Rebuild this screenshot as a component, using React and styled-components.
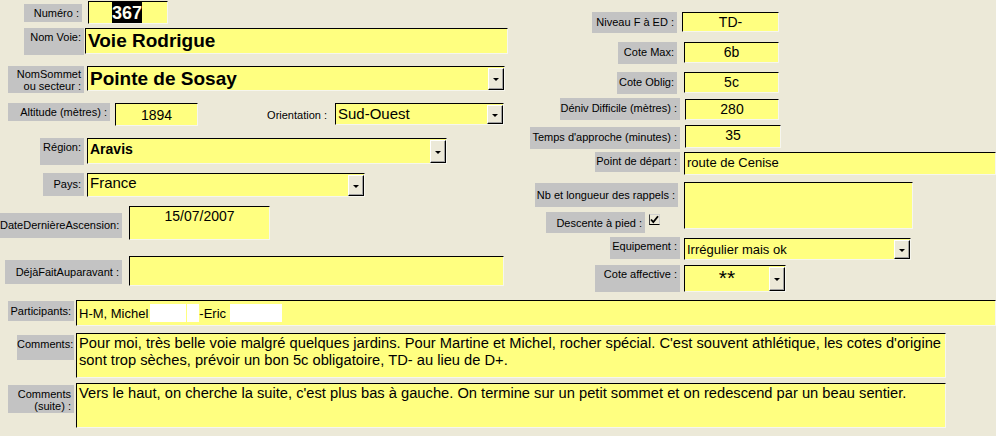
import React from 'react';
import styled, { createGlobalStyle } from 'styled-components';

const Global = createGlobalStyle`
  html, body { margin: 0; padding: 0; background: #ECE9D8; }
  body { font-family: "Liberation Sans", Arial, sans-serif; }
`;

const Page = styled.div`
  width: 996px;
  height: 436px;
  overflow: hidden;
  background: #ECE9D8;
  display: flex;
  flex-direction: column;
`;

const Top = styled.div`
  display: flex;
  height: 292px;
  flex-shrink: 0;
`;

const Column = styled.div`
  display: flex;
  flex-direction: column;
  width: ${p => p.$w}px;
  flex-shrink: 0;
`;

const Bottom = styled.div`
  display: flex;
  flex-direction: column;
  margin-top: 8px;
`;

const Row = styled.div`
  display: flex;
  align-items: flex-start;
  margin-top: ${p => p.$mt || 0}px;
  padding-left: ${p => p.$x || 0}px;
`;

const Stack = styled.div`
  display: flex;
  flex-direction: column;
  align-items: flex-start;
  margin-left: ${p => p.$ml || 0}px;
  flex-shrink: 0;
`;

const Label = styled.div`
  box-sizing: border-box;
  flex-shrink: 0;
  width: ${p => p.$w}px;
  height: ${p => p.$h}px;
  margin-top: ${p => p.$mt || 0}px;
  margin-left: ${p => p.$ml || 0}px;
  background: ${p => (p.$plain ? 'transparent' : '#c3c3c3')};
  color: #000;
  font-size: 11px;
  line-height: 12px;
  text-align: right;
  padding: ${p => (p.$pt ?? 3)}px 3px 0 0;
  white-space: pre-line;
`;

const Field = styled.div`
  box-sizing: border-box;
  flex-shrink: 0;
  width: ${p => p.$w}px;
  height: ${p => p.$h}px;
  margin-top: ${p => p.$mt || 0}px;
  margin-left: ${p => p.$ml || 0}px;
  background: #ffff80;
  border-top: 1px solid #000;
  border-left: 1px solid #000;
  border-right: 1px solid #f6f6ee;
  border-bottom: 1px solid #f6f6ee;
  color: #000;
  font-size: ${p => p.$size || 14}px;
  font-weight: ${p => (p.$bold ? 700 : 400)};
  line-height: ${p => p.$lh || 17}px;
  text-align: ${p => p.$align || 'left'};
  padding: ${p => (p.$pt ?? 2)}px 2px 0 ${p => (p.$pl ?? 2)}px;
  white-space: ${p => (p.$wrap ? 'normal' : 'nowrap')};
  overflow: hidden;
`;

const Combo = styled(Field)`
  display: flex;
  align-items: stretch;
  padding: 0;
`;

const ComboValue = styled.div`
  flex: 1;
  min-width: 0;
  text-align: ${p => p.$align || 'left'};
  font-size: ${p => (p.$vsize ? `${p.$vsize}px` : 'inherit')};
  line-height: ${p => (p.$lh ? `${p.$lh}px` : 'inherit')};
  padding: ${p => (p.$pt ?? 2)}px 2px 0 2px;
`;

const DropButton = styled.div`
  box-sizing: border-box;
  width: 16px;
  flex-shrink: 0;
  margin: 1px 0 0 0;
  background: #ece9d8;
  border-top: 1px solid #fff;
  border-left: 1px solid #fff;
  border-right: 1px solid #000;
  border-bottom: 1px solid #000;
  box-shadow: inset -1px -1px 0 #a0a0a0;
  display: flex;
  align-items: center;
  justify-content: center;
  &::after {
    content: '';
    width: 0;
    height: 0;
    border-left: 3px solid transparent;
    border-right: 3px solid transparent;
    border-top: 3px solid #000;
    margin-top: 1px;
  }
`;

const Selected = styled.span`
  background: #000;
  color: #fffff0;
  padding: 1px 0 1px 0;
`;

const Redact = styled.span`
  display: inline-block;
  width: ${p => p.$w}px;
  height: 18px;
  margin-left: ${p => p.$ml || 0}px;
  background: #fff;
  vertical-align: -4px;
`;

const CheckRow = styled.div`
  display: flex;
  align-items: flex-start;
  margin-top: ${p => p.$mt || 0}px;
  margin-left: ${p => p.$ml || 0}px;
`;

const CheckBox = styled.div`
  box-sizing: border-box;
  width: 11px;
  height: 11px;
  margin-left: 4px;
  margin-top: 2px;
  border-left: 1px solid #404040;
  border-top: 1px solid #d0d0d0;
  border-right: 1px solid #d0d0d0;
  border-bottom: 1px solid #000;
  display: flex;
  align-items: center;
  justify-content: center;
`;

function Check() {
  return (
    <CheckBox>
      <svg width="9" height="9" viewBox="0 0 9 9">
        <path d="M1 4.5 L3.3 7 L8 1.2" fill="none" stroke="#000" strokeWidth="1.8" />
      </svg>
    </CheckBox>
  );
}

function ComboField({ w, h, mt, ml, size, vsize, lh, bold, align, pt, children }) {
  return (
    <Combo $w={w} $h={h} $mt={mt} $ml={ml} $size={size} $bold={bold}>
      <ComboValue $align={align} $pt={pt} $vsize={vsize} $lh={lh}>{children}</ComboValue>
      <DropButton />
    </Combo>
  );
}

export default function App() {
  return (
    <>
      <Global />
      <Page>
        <Top>
          <Column $w={520}>
            <Row $mt={1} $x={24}>
              <Label $w={58} $h={18} $mt={3}>Numéro :</Label>
              <Field $w={80} $h={23} $ml={6} $size={18} $bold $pl={23} $pt={1} $lh={20}>
                <Selected>367</Selected>
              </Field>
            </Row>
            <Row $mt={4} $x={24}>
              <Label $w={60} $h={27}>Nom Voie:</Label>
              <Field $w={423} $h={26} $ml={1} $size={19} $bold $pt={1} $lh={22}>Voie Rodrigue</Field>
            </Row>
            <Row $mt={11} $x={8}>
              <Label $w={76} $h={27} $pt={2}>{'NomSommet\nou secteur :'}</Label>
              <ComboField w={418} h={25} ml={3} size={19} lh={21} bold pt={1}>Pointe de Sosay</ComboField>
            </Row>
            <Row $mt={10} $x={8}>
              <Label $w={102} $h={18}>Altitude (mètres) :</Label>
              <Field $w={83} $h={23} $ml={5} $align="center" $pt={3}>1894</Field>
              <Label $plain $w={70} $h={18} $ml={62} $mt={6} $pt={0}>Orientation :</Label>
              <ComboField w={169} h={22} ml={5} size={15} pt={1}>Sud-Ouest</ComboField>
            </Row>
            <Row $mt={11} $x={40}>
              <Label $w={44} $h={27}>Région:</Label>
              <ComboField w={360} h={26} ml={3} bold pt={2}>Aravis</ComboField>
            </Row>
            <Row $mt={8} $x={43}>
              <Label $w={41} $h={23} $pt={5}>Pays:</Label>
              <ComboField w={278} h={24} ml={3} size={15} pt={0}>France</ComboField>
            </Row>
            <Row $mt={9} $x={0}>
              <Label $w={122} $h={25} $mt={7} $pt={6}>DateDernièreAscension:</Label>
              <Field $w={141} $h={34} $ml={7} $align="center" $pt={1}>15/07/2007</Field>
            </Row>
            <Row $mt={16} $x={5}>
              <Label $w={117} $h={24} $mt={4} $pt={6}>DéjàFaitAuparavant :</Label>
              <Field $w={375} $h={30} $ml={7}></Field>
            </Row>
          </Column>

          <Column $w={476}>
            <Row $mt={12} $x={72}>
              <Label $w={85} $h={21} $pt={4}>Niveau F à ED :</Label>
              <Field $w={97} $h={20} $ml={5} $align="center" $pt={1}>TD-</Field>
            </Row>
            <Row $mt={9} $x={98}>
              <Label $w={59} $h={22} $pt={4}>Cote Max:</Label>
              <Field $w={95} $h={21} $ml={7} $align="center" $pt={1}>6b</Field>
            </Row>
            <Row $mt={8} $x={97}>
              <Label $w={60} $h={22} $pt={4}>Cote Oblig:</Label>
              <Field $w={95} $h={21} $ml={7} $align="center" $pt={1}>5c</Field>
            </Row>
            <Row $mt={4} $x={40}>
              <Label $w={120} $h={22} $pt={4}>Déniv Difficile (mètres) :</Label>
              <Field $w={94} $h={21} $ml={5} $mt={1} $align="center" $pt={1}>280</Field>
            </Row>
            <Row $mt={5} $x={10}>
              <Label $w={150} $h={22} $mt={2} $pt={4}>Temps d'approche (minutes) :</Label>
              <Field $w={96} $h={23} $ml={5} $align="center" $pt={1}>35</Field>
            </Row>
            <Row $mt={3} $x={75}>
              <Label $w={85} $h={20} $pt={3}>Point de départ :</Label>
              <Field $w={312} $h={23} $ml={4} $size={13} $pt={2} $lh={16}>route de Cenise</Field>
            </Row>
            <Row $mt={7} $x={15}>
              <Stack>
                <Label $w={143} $h={24} $mt={1} $pt={6}>Nb et longueur des rappels :</Label>
                <CheckRow $mt={5} $ml={11}>
                  <Label $w={99} $h={21} $pt={5}>Descente à pied :</Label>
                  <Check />
                </CheckRow>
              </Stack>
              <Field $w={229} $h={47} $ml={6}></Field>
            </Row>
            <Row $mt={4} $x={90}>
              <Label $w={70} $h={22} $pt={3}>Equipement :</Label>
              <ComboField w={227} h={22} ml={4} mt={1} size={13} pt={2}>Irrégulier mais ok</ComboField>
            </Row>
            <Row $mt={5} $x={75}>
              <Label $w={85} $h={27} $pt={3}>Cote affective :</Label>
              <ComboField w={102} h={27} ml={4} align="center" vsize={21} lh={20} pt={2}>**</ComboField>
            </Row>
          </Column>
        </Top>

        <Bottom>
          <Row $x={8}>
            <Label $w={66} $h={20} $mt={1} $pt={4}>Participants:</Label>
            <Field $w={920} $h={26} $ml={2} $size={13} $pt={3} $lh={16}>
              H-M, Michel<Redact $w={36} $ml={2} /><Redact $w={12} $ml={1} />-Eric <Redact $w={52} />
            </Field>
          </Row>
          <Row $mt={7} $x={17}>
            <Label $w={57} $h={25} $mt={2} $pt={3}>Comments:</Label>
            <Field $w={870} $h={45} $ml={2} $size={14.7} $wrap $pt={1} $lh={17}>
              Pour moi, très belle voie malgré quelques jardins. Pour Martine et Michel, rocher spécial. C'est souvent athlétique, les cotes d'origine sont trop sèches, prévoir un bon 5c obligatoire, TD- au lieu de D+.
            </Field>
          </Row>
          <Row $mt={5} $x={8}>
            <Label $w={66} $h={28} $mt={2} $pt={3}>{'Comments\n(suite) :'}</Label>
            <Field $w={870} $h={45} $ml={2} $size={14.7} $wrap $pt={1} $lh={17}>
              Vers le haut, on cherche la suite, c'est plus bas à gauche. On termine sur un petit sommet et on redescend par un beau sentier.
            </Field>
          </Row>
        </Bottom>
      </Page>
    </>
  );
}
